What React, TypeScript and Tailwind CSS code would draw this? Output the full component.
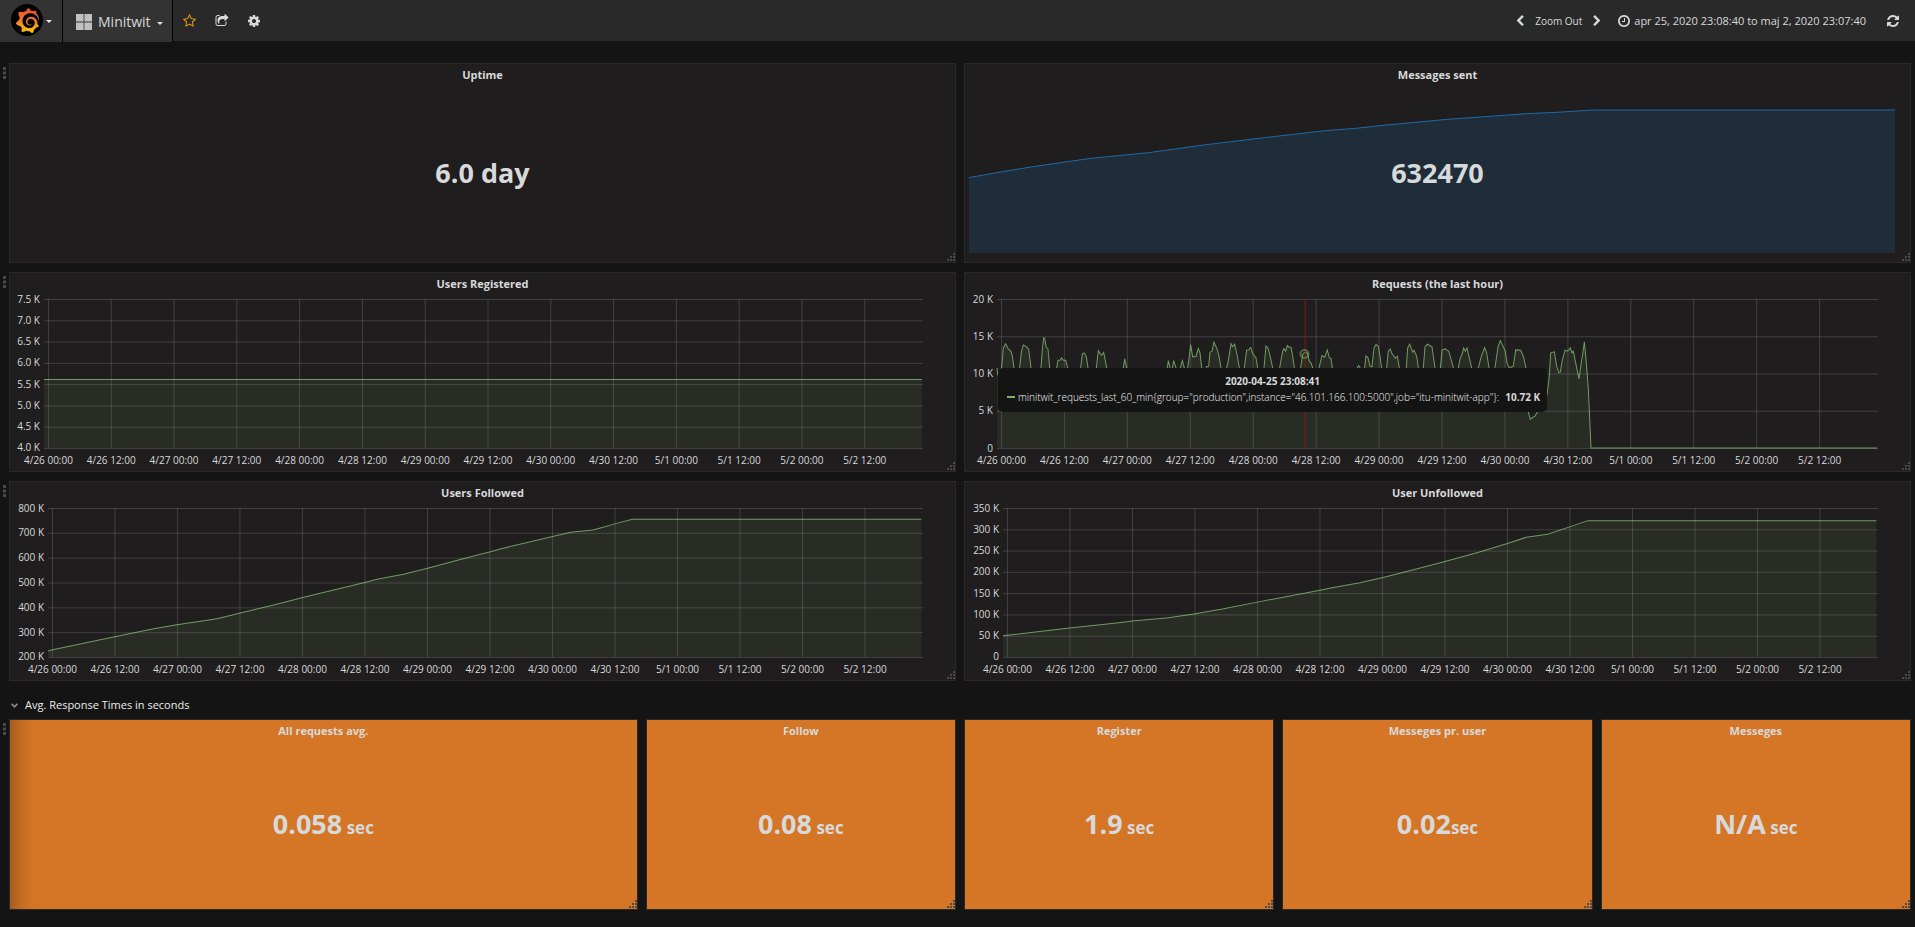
import React from "react";
import { SiGrafana } from "react-icons/si";

type Point = [number, number];

const FA = {
  star: "M1137 1004l306-297-422-62-189-382-189 382-422 62 306 297-73 421 378-199 377 199zm527-357q0 22-26 48l-363 354 86 500q1 7 1 20 0 50-41 50-19 0-40-12l-449-236-449 236q-22 12-40 12-21 0-31.5-14.5t-10.5-35.5q0-6 2-20l86-500-364-354q-25-27-25-48 0-37 56-46l502-73 225-455q19-41 49-41t49 41l225 455 502 73q56 9 56 46z",
  share: "M1472 989v259q0 119-84.5 203.5t-203.5 84.5h-832q-119 0-203.5-84.5t-84.5-203.5v-832q0-119 84.5-203.5t203.5-84.5h255q13 0 22.5 9.5t9.5 22.5q0 27-26 32-77 26-133 60-10 4-16 4h-112q-66 0-113 47t-47 113v832q0 66 47 113t113 47h832q66 0 113-47t47-113v-214q0-19 18-29 28-13 54-37 16-16 35-8 21 9 21 29zm237-496l-384 384q-18 19-45 19-12 0-25-5-39-17-39-59v-192h-160q-323 0-438 131-119 137-74 473 3 23-20 34-8 2-12 2-16 0-26-13-10-14-21-31t-39.5-68.5-49.5-99.5-38.5-114-17.5-122q0-49 3.5-91t14-90 28-88 47-81.5 68.5-74 94.5-61.5 124.5-48.5 159.5-30.5 196.5-11h160v-192q0-42 39-59 13-5 25-5 26 0 45 19l384 384q19 19 19 45t-19 45z",
  cog: "M1152 896q0-106-75-181t-181-75-181 75-75 181 75 181 181 75 181-75 75-181zm512-109v222q0 12-8 23t-20 13l-185 28q-19 54-39 91 35 50 107 138 10 12 10 25t-9 23q-27 37-99 108t-94 71q-12 0-26-9l-138-108q-44 23-91 38-16 136-29 186-7 28-36 28h-222q-14 0-24.5-8.5t-11.5-21.5l-28-184q-49-16-90-37l-141 107q-10 9-25 9-14 0-25-11-126-114-165-168-7-10-7-23 0-12 8-23 15-21 51-66.5t54-70.5q-27-50-41-99l-183-27q-13-2-21-12.5t-8-23.5v-222q0-12 8-23t19-13l186-28q14-46 39-92-40-57-107-138-10-12-10-24 0-10 9-23 26-36 98.5-107.5t94.5-71.5q13 0 26 10l138 107q44-23 91-38 16-136 29-186 7-28 36-28h222q14 0 24.5 8.5t11.5 21.5l28 184q49 16 90 37l142-107q9-9 24-9 13 0 25 10 129 119 165 170 7 8 7 22 0 12-8 23-15 21-51 66.5t-54 70.5q26 50 41 98l183 28q13 2 21 12.5t8 23.5z",
  left: "M1427 301l-531 531 531 531q19 19 19 45t-19 45l-166 166q-19 19-45 19t-45-19l-742-742q-19-19-19-45t19-45l742-742q19-19 45-19t45 19l166 166q19 19 19 45t-19 45z",
  right: "M1363 877l-742 742q-19 19-45 19t-45-19l-166-166q-19-19-19-45t19-45l531-531-531-531q-19-19-19-45t19-45l166-166q19-19 45-19t45 19l742 742q19 19 19 45t-19 45z",
  clock: "M1024 544v448q0 14-9 23t-23 9h-320q-14 0-23-9t-9-23v-64q0-14 9-23t23-9h224v-352q0-14 9-23t23-9h64q14 0 23 9t9 23zm416 352q0-148-73-273t-198-198-273-73-273 73-198 198-73 273 73 273 198 198 273 73 273-73 198-198 73-273zm224 0q0 209-103 385.5t-279.5 279.5-385.5 103-385.5-103-279.5-279.5-103-385.5 103-385.5 279.5-279.5 385.5-103 385.5 103 279.5 279.5 103 385.5z",
  refresh: "M1639 1056q0 5-1 7-64 268-268 434.5t-478 166.5q-146 0-282.5-55t-243.5-157l-129 129q-19 19-45 19t-45-19-19-45v-448q0-26 19-45t45-19h448q26 0 45 19t19 45-19 45l-137 137q71 66 161 102t187 36q134 0 250-65t186-179q11-17 53-117 8-23 30-23h192q13 0 22.5 9.5t9.5 22.5zm25-800v448q0 26-19 45t-45 19h-448q-26 0-45-19t-19-45 19-45l138-138q-148-137-349-137-134 0-250 65t-186 179q-11 17-53 117-8 23-30 23h-199q-13 0-22.5-9.5t-9.5-22.5v-7q65-268 270-434.5t480-166.5q146 0 284 55.5t245 156.5l130-129q19-19 45-19t45 19 19 45z",
};

function Icon({ d, className }: { d: string; className: string }) {
  return (
    <svg viewBox="0 0 1792 1792" fill="currentColor" aria-hidden="true" className={className}>
      <path d={d} />
    </svg>
  );
}

function Caret() {
  return (
    <svg viewBox="0 0 6 3" aria-hidden="true" className="h-[3px] w-[6px] fill-[#e3e3e3]">
      <path d="M0 0h6L3 3z" />
    </svg>
  );
}

function DashboardIcon() {
  return (
    <svg viewBox="0 0 16 16" aria-hidden="true" className="size-4">
      <defs>
        <pattern id="hatch" width="2" height="2" patternUnits="userSpaceOnUse" patternTransform="rotate(45)">
          <rect width="2" height="2" fill="#d8d8d8" />
          <rect width="1" height="2" fill="#a9a9a9" />
        </pattern>
      </defs>
      <path fill="url(#hatch)" d="M0 0h7.6v7.6H0zM8.4 0H16v7.6H8.4zM0 8.4h7.6V16H0zM8.4 8.4H16V16H8.4z" />
    </svg>
  );
}

function Header() {
  return (
    <header className="flex h-[41px] items-start bg-[#292929] text-[#d8d9da]">
      <button type="button" aria-label="Main menu" className="flex h-[42px] w-[63px] items-center gap-[3px] border-r border-black bg-[#333333] pl-[11px]">
        <span className="mb-[2px] flex size-8 items-center justify-center rounded-full bg-black">
          <svg width="0" height="0" className="absolute">
            <defs>
              <linearGradient id="flame" x1="0" y1="0" x2="0" y2="1">
                <stop offset="0" stopColor="#ef4e28" />
                <stop offset="0.45" stopColor="#f2742a" />
                <stop offset="1" stopColor="#fcc512" />
              </linearGradient>
            </defs>
          </svg>
          <SiGrafana className="size-[25px]" style={{ fill: "url(#flame)" }} />
        </span>
        <Caret />
      </button>
      <button type="button" className="flex h-[42px] w-[110px] items-center gap-[6px] border-r border-black bg-[#333333] pt-px pl-[13px] text-sm">
        <DashboardIcon />
        <span>Minitwit</span>
        <span className="mt-1"><Caret /></span>
      </button>
      <div className="flex h-[42px] items-center gap-[18px] pl-[10px]">
        <button type="button" aria-label="Mark as favorite" className="text-[#eb9e14]"><Icon d={FA.star} className="size-[14px]" /></button>
        <button type="button" aria-label="Share dashboard"><Icon d={FA.share} className="size-[14px]" /></button>
        <button type="button" aria-label="Dashboard settings"><Icon d={FA.cog} className="size-[14px]" /></button>
      </div>
      <div className="ml-auto flex h-[42px] items-center pr-[15px]">
        <button type="button" aria-label="Shift time backward"><Icon d={FA.left} className="size-3" /></button>
        <button type="button" className="px-[9px] text-[10px]">Zoom Out</button>
        <button type="button" aria-label="Shift time forward"><Icon d={FA.right} className="size-3" /></button>
        <button type="button" className="ml-[14px] flex items-center gap-[3px] text-[11px]">
          <Icon d={FA.clock} className="size-[14px]" />
          <span>apr 25, 2020 23:08:40 to maj 2, 2020 23:07:40</span>
        </button>
        <button type="button" aria-label="Refresh" className="ml-5"><Icon d={FA.refresh} className="size-[14px]" /></button>
      </div>
    </header>
  );
}

function ResizeHandle({ className }: { className: string }) {
  return (
    <svg viewBox="0 0 8 8" aria-hidden="true" className={`absolute right-0 bottom-px size-2 ${className}`}>
      <path d="M0 6h2v2H0zM3 6h2v2H3zM6 6h2v2H6zM3 3h2v2H3zM6 3h2v2H6zM6 0h2v2H6z" />
    </svg>
  );
}

function RowHandle() {
  return (
    <svg viewBox="0 0 3 12" aria-hidden="true" className="absolute top-1 -left-[6px] h-3 w-[3px] fill-[#4b4b4b]">
      <path d="M0 0h3v3H0zM0 4.5h3v3H0zM0 9h3v3H0z" />
    </svg>
  );
}

const darkPanel = "border-[#292929] bg-[#1f1d1d]";
const orangePanel = "border-[#2b2a2a] bg-[#d47626]";

function Panel({ title, orange, children }: { title: string; orange?: boolean; children: React.ReactNode }) {
  return (
    <section className={`relative flex h-full flex-col border ${orange ? orangePanel : darkPanel}`}>
      <h2 className="relative h-[22px] text-center text-[11px] leading-[22px] font-bold">{title}</h2>
      {children}
      <ResizeHandle className={orange ? "fill-[#4d4c4a]" : "fill-[#4a4849]"} />
    </section>
  );
}

function Stat({ value, unit }: { value: string; unit?: string }) {
  return (
    <p className="relative flex flex-1 items-center justify-center pb-[2px] text-[27px] font-bold">
      <span className="whitespace-pre">
        {value}
        {unit && <span className="text-[17px]">{unit}</span>}
      </span>
    </p>
  );
}

const toPoints = (points: Point[]) => points.map((p) => p.join(",")).join(" ");

function Area({ points, width, height, line, fill }: { points: Point[]; width: number; height: number; line: string; fill: string }) {
  const last = points[points.length - 1][0];
  const closed: Point[] = [[points[0][0], height], ...points, [last, height]];
  return (
    <svg width="100%" height="100%" viewBox={`0 0 ${width} ${height}`} preserveAspectRatio="none" overflow="visible">
      <polygon points={toPoints(closed)} className={fill} />
      <polyline points={toPoints(points)} fill="none" strokeWidth="1" vectorEffect="non-scaling-stroke" className={line} />
    </svg>
  );
}

const DAYS = ["4/26", "4/27", "4/28", "4/29", "4/30", "5/1", "5/2"];
const TICKS = DAYS.flatMap((day) => [`${day} 00:00`, `${day} 12:00`]);
const RANGE_MINUTES = 10079;
const FIRST_TICK = 51;

const tickX = (i: number) => `${((FIRST_TICK + i * 720) / RANGE_MINUTES) * 100}%`;

type ChartProps = {
  label: string;
  yLabels: string[];
  axisWidth: string;
  width: number;
  points: Point[];
  children?: React.ReactNode;
};

function Chart({ label, yLabels, axisWidth, width, points, children }: ChartProps) {
  const steps = yLabels.length - 1;
  return (
    <div className="flex flex-1 pt-1 pr-8 text-[10px]">
      <ul className={`flex h-[149px] shrink-0 flex-col justify-between pr-1 ${axisWidth}`}>
        {yLabels.map((text) => (
          <li key={text} className="flex h-0 items-center justify-end">{text}</li>
        ))}
      </ul>
      <svg role="img" aria-label={label} className="h-[149px] min-w-0 flex-1 overflow-visible">
        <Area points={points} width={width} height={448} line="stroke-[#6f9c61]" fill="fill-[#7eb26d]/10" />
        <g className="stroke-[#c8c8c8]/20">
          {yLabels.map((text, i) => (
            <line key={text} x1="0" x2="100%" y1={(i * 149) / steps + 0.5} y2={(i * 149) / steps + 0.5} />
          ))}
          {TICKS.map((tick, i) => (
            <line key={tick} x1={tickX(i)} x2={tickX(i)} y1="0" y2="149" />
          ))}
        </g>
        {TICKS.map((tick, i) => (
          <text key={tick} x={tickX(i)} y="165" textAnchor="middle" fill="currentColor">{tick}</text>
        ))}
        {children}
      </svg>
    </div>
  );
}

const MESSAGES: Point[] = [[0, 203], [55, 185], [105, 170], [200, 145], [295, 128], [385, 105], [485, 83], [585, 62], [635, 55], [685, 45], [785, 28], [855, 19], [915, 11], [965, 7], [1025, 0], [1520, 0]];

const REGISTERED: Point[] = [[0, 242], [2634, 242]];

const FOLLOWED: Point[] = [[0, 430], [14, 426], [200, 387], [317, 363], [387, 351], [507, 333], [577, 316], [707, 284], [764, 269], [950, 224], [987, 214], [1067, 199], [1139, 181], [1217, 160], [1297, 139], [1325, 132], [1357, 123], [1568, 73], [1634, 66], [1657, 60], [1703, 47], [1753, 34], [2620, 34]];

const UNFOLLOWED: Point[] = [[0, 384], [200, 361], [348, 345], [388, 340], [497, 330], [577, 318], [658, 304], [763, 283], [853, 266], [951, 247], [991, 239], [1071, 225], [1140, 209], [1211, 191], [1326, 161], [1427, 133], [1513, 107], [1570, 88], [1634, 79], [1702, 56], [1754, 38], [2620, 38]];

const REQUESTS: Point[] = [
  [0, 207], [2, 226], [14, 207], [19, 147], [26, 135], [33, 149], [42, 158], [46, 172], [51, 207], [59, 252], [68, 207], [73, 160], [79, 138], [89, 144], [95, 152], [102, 207],
  [117, 250], [132, 207], [136, 152], [140, 117], [143, 117], [148, 146], [153, 150], [158, 207], [169, 250], [179, 207], [183, 184], [189, 184], [194, 177], [199, 184], [206, 184], [212, 207],
  [232, 250], [251, 207], [256, 165], [262, 162], [268, 174], [273, 207], [286, 250], [298, 207], [304, 155], [308, 162], [314, 169], [320, 161], [324, 180], [329, 207],
  [354, 250], [379, 207], [383, 180], [389, 207], [449, 260], [511, 207], [514, 185], [519, 207], [525, 212], [530, 185], [537, 207], [544, 220], [550, 207], [556, 185], [562, 207], [567, 217],
  [572, 207], [577, 172], [581, 137], [587, 174], [597, 172], [604, 149], [609, 162], [614, 207], [622, 225], [629, 203], [635, 202], [639, 160], [645, 157], [651, 130], [659, 148], [665, 167], [672, 207],
  [681, 230], [689, 207], [695, 180], [702, 134], [707, 144], [713, 136], [721, 172], [727, 207], [734, 230], [742, 207], [749, 154], [755, 153], [761, 146], [767, 164], [777, 177], [782, 207],
  [791, 230], [801, 207], [807, 141], [813, 148], [819, 170], [827, 207], [838, 230], [848, 207], [857, 157], [861, 149], [866, 157], [871, 140], [876, 145], [882, 145], [887, 172], [892, 207],
  [901, 230], [911, 207], [917, 167], [924, 160], [931, 163], [937, 187], [943, 194], [947, 207], [957, 230], [966, 207], [975, 170], [983, 175], [991, 153], [997, 177], [1002, 179], [1006, 207],
  [1044, 270], [1081, 207], [1085, 200], [1089, 207], [1096, 222], [1103, 207], [1107, 171], [1113, 177], [1119, 202], [1125, 204], [1131, 147], [1137, 137], [1144, 142], [1149, 172], [1154, 207],
  [1161, 232], [1169, 207], [1174, 157], [1180, 150], [1185, 165], [1195, 178], [1201, 172], [1207, 207], [1217, 230], [1228, 207], [1232, 147], [1238, 136], [1247, 160], [1251, 154], [1259, 172], [1264, 207],
  [1271, 232], [1279, 207], [1284, 144], [1291, 136], [1305, 144], [1309, 172], [1314, 207], [1322, 232], [1330, 207], [1335, 154], [1345, 150], [1355, 157], [1361, 177], [1369, 207],
  [1377, 232], [1384, 207], [1390, 177], [1396, 164], [1400, 147], [1405, 157], [1410, 147], [1417, 177], [1424, 207], [1434, 232], [1444, 207], [1453, 172], [1463, 146], [1469, 162], [1476, 207],
  [1486, 232], [1494, 207], [1503, 144], [1510, 125], [1519, 144], [1525, 157], [1530, 192], [1536, 205], [1542, 205], [1549, 202], [1556, 153], [1571, 154], [1579, 172], [1587, 207], [1590, 282],
  [1595, 344], [1600, 362], [1605, 357], [1614, 352], [1622, 339], [1639, 332], [1651, 282], [1657, 232], [1661, 162], [1672, 159], [1679, 202], [1686, 222], [1690, 220], [1696, 184], [1704, 154],
  [1712, 157], [1720, 147], [1725, 162], [1729, 157], [1736, 192], [1746, 240], [1752, 197], [1757, 167], [1762, 129], [1768, 192], [1774, 272], [1782, 448], [2640, 448],
];

function Tooltip() {
  return (
    <div role="tooltip" className="absolute top-[95px] left-[33px] flex h-11 min-w-[549px] flex-col justify-center gap-[2px] rounded-[5px] bg-[#141414] px-[7px] pb-[3px] text-[10px] leading-[14px]">
      <p className="text-center font-bold">2020-04-25 23:08:41</p>
      <p className="flex items-center whitespace-nowrap">
        <span className="mr-[3px] ml-[2px] h-[2px] w-2 bg-[#7eb26d]" />
        <span className="font-light text-[#f4f4f4]">{'minitwit_requests_last_60_min{group="production",instance="46.101.166.100:5000",job="itu-minitwit-app"}:'}</span>
        <span className="ml-auto pl-[6px] font-bold">10.72 K</span>
      </p>
    </div>
  );
}

export default function App() {
  return (
    <div className="min-h-screen bg-[#141414] font-['Open_Sans',sans-serif] text-[#d8d9da]">
      <Header />
      <main className="pt-[22px] pr-1 pl-[9px]">
        <div className="flex flex-col gap-[9px]">
          <div className="relative grid h-[200px] grid-cols-2 gap-2">
            <RowHandle />
            <Panel title="Uptime"><Stat value="6.0 day" /></Panel>
            <Panel title="Messages sent">
              <div className="absolute top-[46px] right-[15px] bottom-[9px] left-1">
                <Area points={MESSAGES} width={1520} height={429} line="stroke-[#1f6aa8]" fill="fill-[#1f76bd]/18" />
              </div>
              <Stat value="632470" />
            </Panel>
          </div>
          <div className="relative grid h-[200px] grid-cols-2 gap-2">
            <RowHandle />
            <Panel title="Users Registered">
              <Chart label="Users registered over time" axisWidth="w-[34px]" width={2637} points={REGISTERED}
                yLabels={["7.5 K", "7.0 K", "6.5 K", "6.0 K", "5.5 K", "5.0 K", "4.5 K", "4.0 K"]} />
            </Panel>
            <Panel title="Requests (the last hour)">
              <Chart label="Requests in the last hour" axisWidth="w-[32px]" width={2643} points={REQUESTS}
                yLabels={["20 K", "15 K", "10 K", "5 K", "0"]}>
                <line x1="34.98%" x2="34.98%" y1="0" y2="149" className="stroke-[#8c1515]" />
                <circle cx="34.9%" cy="55" r="4" fill="none" strokeWidth="2" className="stroke-[#7eb26d]/50" />
              </Chart>
              <Tooltip />
            </Panel>
          </div>
          <div className="relative grid h-[200px] grid-cols-2 gap-2">
            <RowHandle />
            <Panel title="Users Followed">
              <Chart label="Users followed over time" axisWidth="w-[38px]" width={2625} points={FOLLOWED}
                yLabels={["800 K", "700 K", "600 K", "500 K", "400 K", "300 K", "200 K"]} />
            </Panel>
            <Panel title="User Unfollowed">
              <Chart label="Users unfollowed over time" axisWidth="w-[38px]" width={2625} points={UNFOLLOWED}
                yLabels={["350 K", "300 K", "250 K", "200 K", "150 K", "100 K", "50 K", "0"]} />
            </Panel>
          </div>
        </div>
        <button type="button" className="mt-3 mb-0.5 flex h-6 items-center gap-[7px] pl-[2px] text-[11px] text-[#ececec]">
          <svg viewBox="0 0 7 5" aria-hidden="true" className="h-[5px] w-[7px] fill-none stroke-[#8e8e8e]" strokeWidth="1.6">
            <path d="M.6.8l2.9 3L6.4.8" />
          </svg>
          <span>Avg. Response Times in seconds</span>
        </button>
        <div className="relative grid h-[191px] grid-cols-6 gap-2">
          <RowHandle />
          <div className="relative col-span-2">
            <Panel title="All requests avg." orange><Stat value="0.058" unit=" sec" /></Panel>
            <div className="pointer-events-none absolute inset-px shadow-[inset_28px_0_24px_-26px_rgba(0,0,0,0.4)]" />
          </div>
          <Panel title="Follow" orange><Stat value="0.08" unit=" sec" /></Panel>
          <Panel title="Register" orange><Stat value="1.9" unit=" sec" /></Panel>
          <Panel title="Messeges pr. user" orange><Stat value="0.02" unit="sec" /></Panel>
          <Panel title="Messeges" orange><Stat value="N/A" unit=" sec" /></Panel>
        </div>
      </main>
    </div>
  );
}
